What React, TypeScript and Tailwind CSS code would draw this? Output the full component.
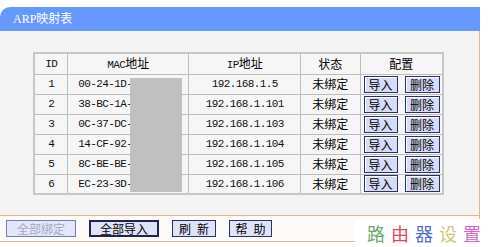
import React from 'react';

const rows = [
  { id: 1, mac: '00-24-1D-', ip: '192.168.1.5' },
  { id: 2, mac: '38-BC-1A-', ip: '192.168.1.101' },
  { id: 3, mac: '0C-37-DC-', ip: '192.168.1.103' },
  { id: 4, mac: '14-CF-92-', ip: '192.168.1.104' },
  { id: 5, mac: '8C-BE-BE-', ip: '192.168.1.105' },
  { id: 6, mac: 'EC-23-3D-', ip: '192.168.1.106' },
];

const cjk = "font-['Noto_Sans_CJK_SC',sans-serif]";
const mono = "font-['Liberation_Mono','Noto_Sans_CJK_SC',monospace] text-[11px] tracking-[-0.6px] text-[#111]";
const cell = 'border border-[#bdbdbd] p-0 text-center align-middle';

function SmallBtn({ label, w }: { label: string; w: string }) {
  return (
    <button
      className={`${w} h-[17px] bg-[#d6dbf7] border border-[#2e3060] shadow-[inset_1px_1px_0_#ffffff] text-[12px] leading-[15px] text-black ${cjk}`}
    >
      {label}
    </button>
  );
}

function BarBtn({ label, w, disabled, strong }: { label: React.ReactNode; w: string; disabled?: boolean; strong?: boolean }) {
  return (
    <button
      className={`${w} h-[17px] text-[12px] leading-[13px] flex items-center justify-center ${cjk} ${
        disabled
          ? 'bg-[#e2e6f8] border border-[#6f7fa8] text-[#a6a9bd]'
          : strong
          ? 'bg-[#dfe3f8] border-2 border-[#23244a] text-black'
          : 'bg-[#dfe3f8] border border-[#2e3060] text-black'
      }`}
    >
      {label}
    </button>
  );
}

export default function App() {
  return (
    <div className={`relative w-[491px] h-[247px] bg-white pt-[7px] ${cjk}`}>
      <div className="w-[480px]">
        {/* title bar */}
        <div className="h-[24px] bg-[#6699ff] rounded-tl-[10px] flex items-center pl-[13px]">
          <span className="text-white text-[12px] leading-none font-['Liberation_Serif','Noto_Sans_CJK_SC',serif]">ARP映射表</span>
        </div>

        {/* body */}
        <div className="h-[184px] bg-[#f3f3f3] border-r border-[#e2b784] pt-[21px] pl-[33px]">
          <div className="relative w-[411px]">
            <table className="w-[411px] border-collapse border-2 border-[#c6c6c6] text-[12px] text-black bg-[#f6f6f6]">
              <colgroup>
                <col className="w-[34px]" />
                <col className="w-[122px]" />
                <col className="w-[112px]" />
                <col className="w-[60px]" />
                <col className="w-[83px]" />
              </colgroup>
              <thead>
                <tr className="h-[21px]">
                  <th className={`${cell} font-normal ${mono}`}>ID</th>
                  <th className={`${cell} font-normal`}>
                    <span className={mono}>MAC</span>地址
                  </th>
                  <th className={`${cell} font-normal`}>
                    <span className={mono}>IP</span>地址
                  </th>
                  <th className={`${cell} font-normal`}>状态</th>
                  <th className={`${cell} font-normal`}>配置</th>
                </tr>
              </thead>
              <tbody>
                {rows.map((r) => (
                  <tr key={r.id} className="h-[20px]">
                    <td className={`${cell} ${mono}`}>{r.id}</td>
                    <td className={`${cell} !text-left pl-[10px] ${mono}`}>{r.mac}</td>
                    <td className={`${cell} ${mono}`}>{r.ip}</td>
                    <td className={cell}>未绑定</td>
                    <td className={cell}>
                      <div className="flex items-center gap-[7px] pl-[3px]">
                        <SmallBtn label="导入" w="w-[34px]" />
                        <SmallBtn label="删除" w="w-[35px]" />
                      </div>
                    </td>
                  </tr>
                ))}
              </tbody>
            </table>
            {/* masked MAC tail */}
            <div className="absolute left-[97px] top-[26px] w-[52px] h-[114px] bg-[#c0c0c0]" />
          </div>
        </div>

        {/* bottom bar */}
        <div className="h-[27px] bg-[#fcfbf9] border-y border-r border-[#e2b784] flex items-center pl-[6px] gap-[13px]">
          <BarBtn label="全部绑定" w="w-[70px]" disabled />
          <BarBtn label="全部导入" w="w-[70px]" strong />
          <BarBtn label={<><span>刷</span><span className="ml-[6px]">新</span></>} w="w-[44px]" />
          <BarBtn label={<><span>帮</span><span className="ml-[6px]">助</span></>} w="w-[43px]" />
        </div>
      </div>

      {/* watermark */}
      <div className="absolute right-0 bottom-0 w-[136px] h-[28px] bg-white flex items-center justify-end pr-[10px] gap-[6px] text-[18px] leading-none font-['Noto_Sans_CJK_SC',serif]">
        <span className="text-[#6aaa6a]">路</span>
        <span className="text-[#e04650]">由</span>
        <span className="text-[#5070d8]">器</span>
        <span className="text-[#d8c27a]">设</span>
        <span className="text-[#e060cc]">置</span>
      </div>
    </div>
  );
}
